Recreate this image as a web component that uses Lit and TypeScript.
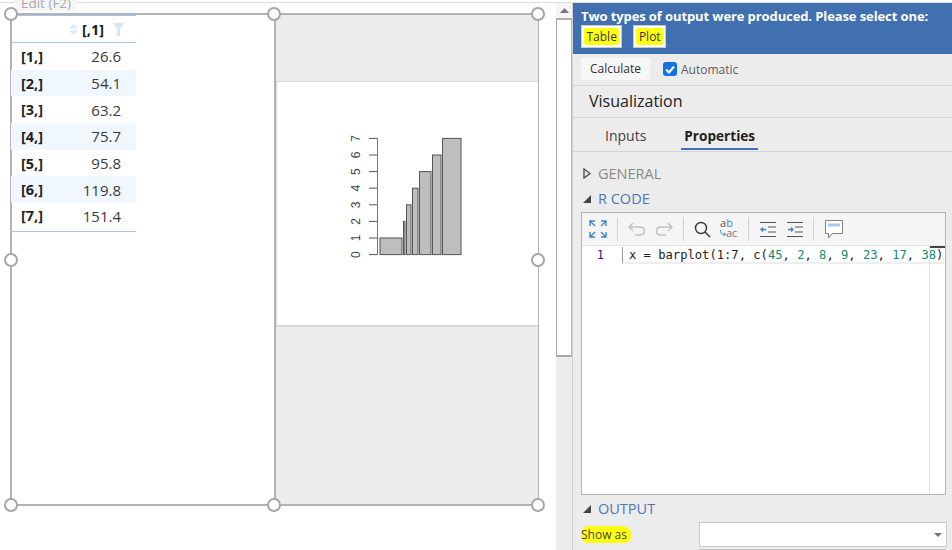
import { LitElement, html, css, svg } from "lit";
import { customElement } from "lit/decorators.js";

const rows = [["[1,]","26.6"],["[2,]","54.1"],["[3,]","63.2"],["[4,]","75.7"],["[5,]","95.8"],["[6,]","119.8"],["[7,]","151.4"]];
const bars: number[][] = [[380,402,238],[403.5,405,221.4],[406.5,411,204.8],[412.5,418,188.2],[419.5,431,171.6],[432.5,441,155],[442.5,461,138.4]];

@customElement("app-root")
export class AppRoot extends LitElement {
  static styles = css`
    :host { display:block; width:952px; height:550px; overflow:hidden; background:#fff; font-family:"Open Sans",sans-serif; color:#252423; }
    .root { display:flex; height:548px; margin-top:2px; border-top:1px solid #dedede; box-sizing:border-box; position:relative; }
    .canvas { width:556px; flex:none; position:relative; padding:10px 0 0 10px; box-sizing:border-box; }
    .edit { position:absolute; left:15px; top:-3px; height:11px; width:62px; background:#f5f5f7; color:#a8a8a8; font-size:13.5px; line-height:6px; overflow:hidden; text-align:center; border-radius:0 0 3px 3px; z-index:1; }
    .frame { width:529px; height:493px; border:2px solid #b3b3b3; box-sizing:border-box; display:flex; position:relative; }
    .left { width:262px; flex:none; border-right:2px solid #b3b3b3; }
    .right { flex:1; background:#ececec; padding-top:66px; }
    .plot { height:246px; background:#fff; border:1px solid #d8d8d8; border-width:1px 0 2px 1px; box-sizing:border-box; }
    .plot svg { display:block; }
    table { border-collapse:collapse; width:125px; font-size:15px; margin-left:-1px; }
    th { height:26px; font-size:14.5px; padding:0; border-top:1px solid #9dc3ee; border-bottom:1px solid #a2c5ec; font-weight:700; color:#1a1a1a; text-align:left; }
    th .hd { display:flex; align-items:center; padding-left:58px; gap:4px; }
    td { height:26.7px; padding:0; }
    td.k { font-weight:700; font-size:14.5px; padding-left:10px; width:50px; color:#1f1f1f; }
    td.v { text-align:right; padding-right:15px; color:#3b3a39; }
    tr.alt td { background:#f0f7fe; }
    tr.last td { border-bottom:1px solid #a2c5ec; height:27.7px; vertical-align:top; line-height:26px; }
    .h { position:absolute; width:10px; height:10px; border:2px solid #a6a6a6; border-radius:50%; background:#fff; z-index:2; }
    .sb { width:16px; flex:none; background:#ececec; box-sizing:border-box; display:flex; flex-direction:column; }
    .sb .up { height:15px; background:#f5f5f5; display:flex; align-items:center; justify-content:center; border-bottom:2px solid #b0b0b0; }
    .sb .thumb { height:337px; background:#fff; box-sizing:border-box; border-left:1px solid #a8a8a8; border-right:1px solid #b8b8b8; border-bottom:2px solid #a8a8a8; }
    .panel { flex:1; background:#ececec; display:flex; flex-direction:column; min-width:0; border-left:1px solid #d0d0d0; box-sizing:border-box; overflow:hidden; }
    .banner { height:51px; flex:none; background:#4070b0; color:#fff; padding:6px 0 0 8px; box-sizing:border-box; font-size:13px; letter-spacing:-.1px; font-weight:700; line-height:15px; white-space:nowrap; }
    .choices { display:flex; gap:11px; margin-top:1px; letter-spacing:0; }
    .choice { border:1px solid #c8c8c8; background:#fff; height:23px; box-sizing:border-box; padding:2px; font-size:12px; font-weight:400; color:#333; display:flex; }
    .choice span { background:#ffff14; padding:0 2.5px; line-height:17px; border-radius:2px; }
    .calc { height:31px; display:flex; align-items:center; padding-left:8px; border-bottom:1px solid #d6d6d6; flex:none; }
    .btn { background:#f7f7f7; height:22px; line-height:22px; width:69px; text-align:center; font-size:12px; color:#333; margin-top:-1px; }
    .chk { margin-left:13px; width:14px; height:14px; border-radius:3px; background:#0f74e0; display:flex; align-items:center; justify-content:center; margin-top:-1px; }
    .auto { margin-left:4px; font-size:12px; color:#5c5c5c; margin-top:-1px; }
    .viz { height:31px; border-bottom:1px solid #d6d6d6; padding-left:16px; font-size:16px; line-height:30px; color:#222; font-weight:500; flex:none; }
    .tabs { height:33px; display:flex; padding-left:32px; border-bottom:1px solid #d6d6d6; font-size:14px; line-height:35px; flex:none; }
    .tab { color:#444; margin-right:38px; }
    .tab.on { font-weight:700; font-size:13.6px; color:#222; margin:0; padding:0 3px; border-bottom:2px solid #3f72b8; height:30px; margin-left:-3px; }
    .sec { display:flex; align-items:center; height:25px; font-size:14.5px; padding-left:10px; gap:7px; color:#8a8a8a; flex:none; }
    .sec.open { color:#4c78b4; }
    .gen { margin-top:9px; }
    .editor { margin:1px 6px 0 8px; height:283px; background:#fff; border:1px solid #b4b4b4; box-sizing:border-box; position:relative; flex:none; }
    .tools { height:33px; background:#f5f5f5; display:flex; align-items:center; padding-left:7px; border-bottom:1px solid #e6e6e6; box-sizing:border-box; }
    .sep { width:1px; height:24px; background:#d2d2d2; margin:0 10px; }
    .tools svg { display:block; flex:none; }
    .ml9 { margin-left:9px; }
    .ml1 { margin-left:1px; }
    .ml11 { margin-left:11px; }
    .code { display:flex; height:17px; margin-top:1px; position:relative; }
    .ln { width:40px; text-align:right; padding-right:18px; box-sizing:border-box; font:12px/17px "DejaVu Sans Mono",monospace; color:#2b1a8a; }
    .line { flex:1; border-left:1px solid #999; border-bottom:2px solid #eee; font:12.15px/16px "DejaVu Sans Mono",monospace; padding-left:6px; white-space:pre; color:#222; height:17px; box-sizing:border-box; overflow:hidden; }
    .n { color:#0f8a6f; }
    .mini { position:absolute; right:0; top:33px; bottom:0; width:15px; border-left:1px solid #e2e2e2; }
    .mini i { display:block; height:2px; background:#444; }
    .out { margin-top:1px; }
    .show { display:flex; align-items:center; padding-left:8px; height:25px; margin-top:1px; flex:none; }
    .show .lbl { background:#ffff14; font-size:12px; width:50px; height:17px; line-height:17px; border-radius:8px 8px 6px 6px; color:#444; white-space:nowrap; margin-top:-1px; }
    .sel { margin-left:68px; width:248px; height:25px; background:#fff; border:1px solid #c8c8c8; box-sizing:border-box; display:flex; align-items:center; justify-content:flex-end; padding-right:4px; }
    .next { margin:2px 6px 0 126px; border-top:1px solid #c8c8c8; height:2px; flex:none; }
  `;

  private plot() {
    const ticks = [0,1,2,3,4,5,6,7];
    const y = (i: number) => 254.6 - i * 16.6;
    return html`<svg width="261" height="243" viewBox="277 82 261 243">
      ${ticks.map(i => svg`<line x1="369" x2="377.5" y1=${y(i)} y2=${y(i)} stroke="#555" stroke-width="1"></line>
        <text x="0" y="0" transform="translate(360 ${y(i)}) rotate(-90)" text-anchor="middle" font-family="Liberation Sans" font-size="12" fill="#444">${i}</text>`)}
      <line x1="377.5" x2="377.5" y1="138.4" y2="254.6" stroke="#777" stroke-width="1"></line>
      ${bars.map(b => svg`<rect x=${b[0]} y=${b[2]} width=${b[1]-b[0]} height=${254.6-b[2]} fill="#bebebe" stroke="#555" stroke-width="1"></rect>`)}
    </svg>`;
  }

  render() {
    const hs = [[4,4],[267,4],[531,4],[4,250],[531,250],[4,495],[267,495],[531,495]];
    return html`<div class="root">
      <div class="canvas">
        <div class="edit">Edit (F2)</div>
        <div class="frame">
          <div class="left">
            <table>
              <thead><tr><th colspan="2"><div class="hd">
                <svg width="9" height="11" viewBox="0 0 9 11"><path d="M4.5 0 9 4.5H0zM4.5 11 0 6.5h9z" fill="#d9e8f8"></path></svg>
                <span>[,1]</span>
                <svg style="margin-left:5px" width="11" height="13" viewBox="0 0 11 13"><path d="M0 0h11L7 6v7H4V6z" fill="#d4e5f7"></path></svg>
              </div></th></tr></thead>
              <tbody>${rows.map((r,i)=>html`<tr class="${i%2?'alt':''} ${i===6?'last':''}"><td class="k">${r[0]}</td><td class="v">${r[1]}</td></tr>`)}</tbody>
            </table>
          </div>
          <div class="right"><div class="plot">${this.plot()}</div></div>
        </div>
        ${hs.map(h=>html`<div class="h" style="left:${h[0]}px;top:${h[1]}px"></div>`)}
      </div>
      <div class="sb"><div class="up"><svg width="9" height="5" viewBox="0 0 9 5"><path d="M4.5 0 9 5H0z" fill="#777"></path></svg></div><div class="thumb"></div></div>
      <div class="panel">
        <div class="banner">Two types of output were produced. Please select one:
          <div class="choices"><div class="choice"><span>Table</span></div><div class="choice"><span>Plot</span></div></div>
        </div>
        <div class="calc"><div class="btn">Calculate</div>
          <div class="chk"><svg width="10" height="9" viewBox="0 0 10 9"><path d="M1 4.5 4 7.5 9 1.5" fill="none" stroke="#fff" stroke-width="2"></path></svg></div>
          <div class="auto">Automatic</div></div>
        <div class="viz">Visualization</div>
        <div class="tabs"><div class="tab">Inputs</div><div class="tab on">Properties</div></div>
        <div class="sec gen"><svg width="8" height="11" viewBox="0 0 8 11"><path d="M1 1 7 5.5 1 10z" fill="none" stroke="#555" stroke-width="1.4"></path></svg>GENERAL</div>
        <div class="sec open"><svg width="8" height="8" viewBox="0 0 8 8"><path d="M8 0V8H0z" fill="#444"></path></svg>R CODE</div>
        <div class="editor">
          <div class="tools">
            <svg width="18" height="18" viewBox="0 0 18 18" fill="none" stroke="#3f86d0" stroke-width="1.4"><path d="M1 6V1H6M1 1 6 6M17 6V1H12M17 1 12 6M1 12V17H6M1 17 6 12M17 12V17H12M17 17 12 12"></path></svg>
            <div class="sep"></div>
            <svg width="18" height="14" viewBox="0 0 18 14" fill="none" stroke="#c2c2c2" stroke-width="1.5"><path d="M5 1 1 5 5 9M1 5H12C18 5 18 13 12 13H7"></path></svg>
            <svg class="ml9" width="18" height="14" viewBox="0 0 18 14" fill="none" stroke="#c2c2c2" stroke-width="1.5"><path d="M13 1 17 5 13 9M17 5H6C0 5 0 13 6 13H11"></path></svg>
            <div class="sep"></div>
            <svg width="17" height="17" viewBox="0 0 17 17" fill="none" stroke="#333" stroke-width="1.4"><circle cx="7" cy="7" r="5.5"></circle><path d="M11 11 16 16"></path></svg>
            <svg class="ml9" width="18" height="22" viewBox="0 0 18 22"><text x="0" y="9" font-size="11" font-family="Open Sans" fill="#555">a<tspan fill="#3f86d0">b</tspan></text><text x="6" y="19" font-size="11" font-family="Open Sans" fill="#777">ac</text><path d="M.5 12C.5 16 2 17 5.5 16.5M3.5 14.5 5.5 16.5 3.5 18" fill="none" stroke="#3f86d0"></path></svg>
            <div class="sep"></div>
            <svg class="ml1" width="16" height="15" viewBox="0 0 16 15" fill="none" stroke="#555"><path d="M0 .5H16M8 5H16M8 10H16M0 14.5H16"></path><path d="M6 7.5H1M3 5.5 1 7.5 3 9.5" stroke="#3f86d0" stroke-width="1.3"></path></svg>
            <svg class="ml11" width="16" height="15" viewBox="0 0 16 15" fill="none" stroke="#555"><path d="M0 .5H16M8 5H16M8 10H16M0 14.5H16"></path><path d="M1 7.5H6M4 5.5 6 7.5 4 9.5" stroke="#3f86d0" stroke-width="1.3"></path></svg>
            <div class="sep"></div>
            <svg class="ml1" width="18" height="19" viewBox="0 0 18 19" fill="#fff" stroke="#808080"><path d="M.5 .5H17.5V13.5H7L3.5 18V13.5H.5z"></path><path d="M3 5H15" stroke="#a8c8ec" stroke-width="3"></path></svg>
          </div>
          <div class="code"><div class="ln">1</div><div class="line">x = barplot(1:7, c(<span class="n">45</span>, <span class="n">2</span>, <span class="n">8</span>, <span class="n">9</span>, <span class="n">23</span>, <span class="n">17</span>, <span class="n">38</span>)</div></div>
          <div class="mini"><i></i></div>
        </div>
        <div class="sec open out"><svg width="8" height="8" viewBox="0 0 8 8"><path d="M8 0V8H0z" fill="#444"></path></svg>OUTPUT</div>
        <div class="show"><div class="lbl">Show as</div>
          <div class="sel"><svg width="8" height="4" viewBox="0 0 8 4"><path d="M0 0H8L4 4z" fill="#777"></path></svg></div></div>
        <div class="next"></div>
      </div>
    </div>`;
  }
}
